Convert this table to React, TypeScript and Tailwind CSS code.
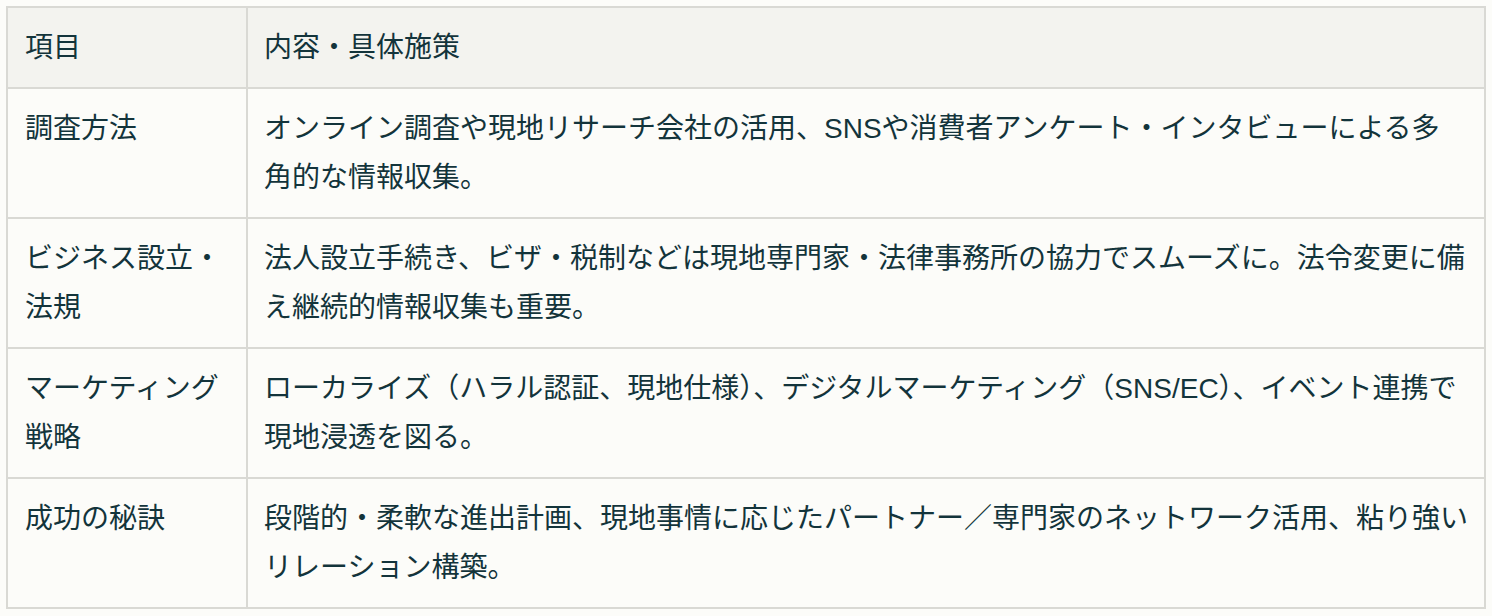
const rows: { item: string; detail: React.ReactNode }[] = [
  {
    item: '調査方法',
    detail: (
      <>
        オンライン調査や現地リサーチ会社の活用、SNSや消費者アンケート・インタビューによる多
        <br />
        角的な情報収集。
      </>
    ),
  },
  {
    item: 'ビジネス設立・法規',
    detail: (
      <>
        法人設立手続き、ビザ・税制などは現地専門家・法律事務所の協力でスムーズに。法令変更に備
        <br />
        え継続的情報収集も重要。
      </>
    ),
  },
  {
    item: 'マーケティング戦略',
    detail: (
      <>
        ローカライズ（ハラル認証、現地仕様）、デジタルマーケティング（SNS/EC）、イベント連携で
        <br />
        現地浸透を図る。
      </>
    ),
  },
  {
    item: '成功の秘訣',
    detail: (
      <>
        段階的・柔軟な進出計画、現地事情に応じたパートナー／専門家のネットワーク活用、粘り強い
        <br />
        リレーション構築。
      </>
    ),
  },
];

const cell = 'border-2 border-[#d9d9d4] py-[15px] text-left align-top font-normal';

export default function App() {
  return (
    <div
      className="min-h-screen bg-[#fcfcf9] p-[6px] text-[28px] leading-[49px] text-[#13343b]"
      style={{ fontFamily: '"Liberation Sans", "Noto Sans CJK JP", sans-serif' }}
    >
      <table className="w-[1480px] table-fixed border-collapse">
        <colgroup>
          <col className="w-[240px]" />
          <col />
        </colgroup>
        <thead>
          <tr className="bg-[#f3f3ef]">
            <th className={`${cell} px-[17px]`}>項目</th>
            <th className={`${cell} pl-[16px] pr-[6px]`}>内容・具体施策</th>
          </tr>
        </thead>
        <tbody>
          {rows.map((r) => (
            <tr key={r.item}>
              <td className={`${cell} px-[17px]`}>{r.item}</td>
              <td className={`${cell} pl-[16px] pr-[6px]`}>{r.detail}</td>
            </tr>
          ))}
        </tbody>
      </table>
    </div>
  );
}
